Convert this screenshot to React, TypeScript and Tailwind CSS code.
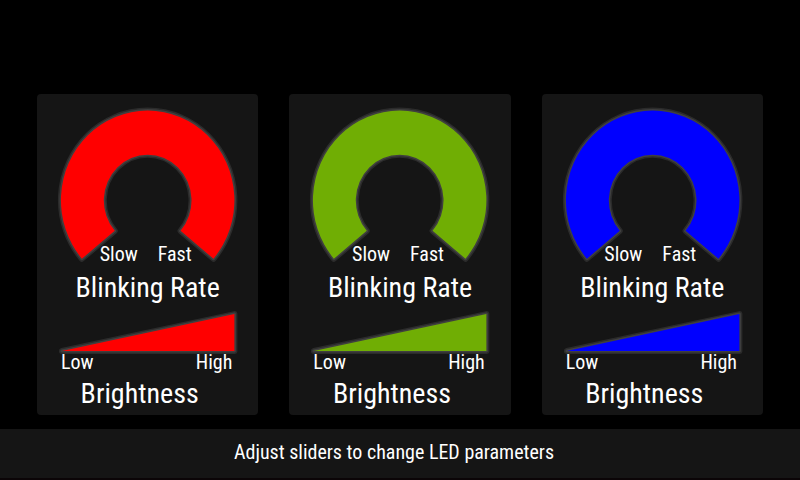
import { useState } from "react";

type Led = { name: string; color: string };

const leds: Led[] = [
  { name: "Red", color: "#ff0000" },
  { name: "Green", color: "#70ae04" },
  { name: "Blue", color: "#0000ff" },
];

function Shape({ d, color }: { d: string; color: string }) {
  return (
    <>
      <path d={d} fill="none" stroke="#484848" strokeOpacity="0.45" strokeWidth="6" strokeLinejoin="round" />
      <path d={d} fill="none" stroke="#484848" strokeOpacity="0.7" strokeWidth="3" strokeLinejoin="round" />
      <path d={d} fill={color} />
    </>
  );
}

function LedCard({ name, color }: Led) {
  const [rate, setRate] = useState(50);
  const [brightness, setBrightness] = useState(50);
  const id = name.toLowerCase();

  return (
    <section aria-label={name} className="min-w-0 flex-1 rounded-[4px] bg-[#151515] pb-[3px]">
      <div className="relative h-[172px]">
        <svg viewBox="0 0 222 172" className="h-full w-full" aria-hidden="true">
          <Shape
            color={color}
            d="M45 165 A87 90 0 1 1 177 165 L144 137 A44 46 0 1 0 78 137 Z"
          />
        </svg>
        <input
          id={`${id}-rate`}
          type="range"
          value={rate}
          onChange={(e) => setRate(Number(e.target.value))}
          className="absolute inset-0 h-full w-full cursor-pointer opacity-0"
        />
        <div className="pointer-events-none absolute inset-x-0 bottom-0 flex justify-center gap-5 pr-1 text-[20px] leading-6">
          <span>Slow</span>
          <span>Fast</span>
        </div>
      </div>
      <label htmlFor={`${id}-rate`} className="mt-1 block text-center text-[28px] leading-9">
        Blinking Rate
      </label>
      <div className="relative mt-1 h-11">
        <svg viewBox="0 0 222 44" className="h-full w-full" aria-hidden="true">
          <Shape color={color} d="M25 41 L198 4 L198 41 Z" />
        </svg>
        <input
          id={`${id}-brightness`}
          type="range"
          value={brightness}
          onChange={(e) => setBrightness(Number(e.target.value))}
          className="absolute inset-0 h-full w-full cursor-pointer opacity-0"
        />
      </div>
      <div className="relative -mt-1 flex justify-between pr-[26px] pl-6 text-[20px] leading-6">
        <span>Low</span>
        <span>High</span>
      </div>
      <label htmlFor={`${id}-brightness`} className="mt-0.5 block pr-4 text-center text-[28px] leading-9">
        Brightness
      </label>
    </section>
  );
}

export default function App() {
  return (
    <div className="flex min-h-screen flex-col justify-end bg-black font-['Roboto_Condensed','Liberation_Sans_Narrow','Liberation_Sans',sans-serif] text-white">
      <main className="flex gap-[31px] px-[37px] pb-[14px]">
        {leds.map((led) => (
          <LedCard key={led.name} {...led} />
        ))}
      </main>
      <footer className="flex h-[51px] items-center justify-center border-b-2 border-[#0b0507] bg-[#151515] pr-3 pb-1 text-[20px] leading-6">
        <p>Adjust sliders to change LED parameters</p>
      </footer>
    </div>
  );
}
